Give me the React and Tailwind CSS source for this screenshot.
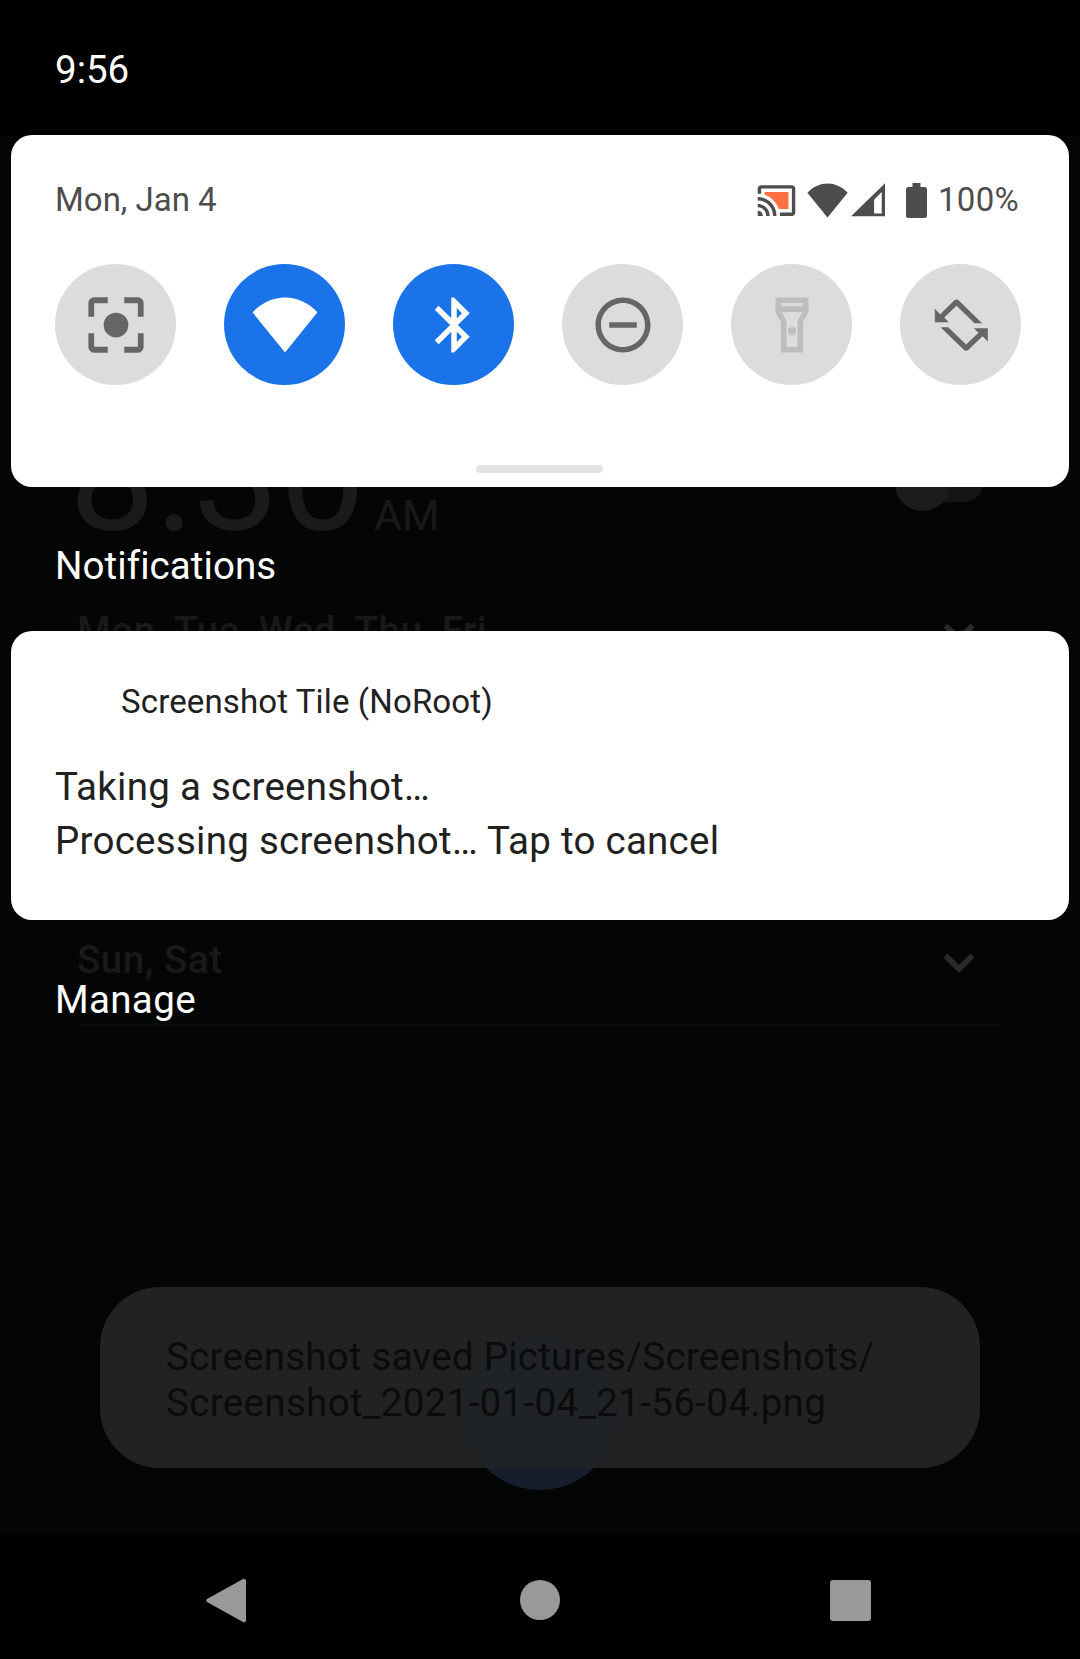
import React from "react";

const wifiPath = "M12 22L23.8 7.4C20.6 4 16.5 2 12 2S3.4 4 .2 7.4L12 22z";

function ScreenshotIcon() {
  return (
    <svg viewBox="0 0 24 24" className="w-[66px] h-[66px]" fill="none">
      <path d="M3 9V4a1 1 0 0 1 1-1h5M15 3h5a1 1 0 0 1 1 1v5M21 15v5a1 1 0 0 1-1 1h-5M9 21H4a1 1 0 0 1-1-1v-5" stroke="#666666" strokeWidth="2.1" />
      <circle cx="12" cy="12" r="4.5" fill="#666666" />
    </svg>
  );
}

function WifiIcon({ className, fill }) {
  return (
    <svg viewBox="0 0 24 24" className={className}>
      <path d={wifiPath} fill={fill} />
    </svg>
  );
}

function BluetoothIcon() {
  return (
    <svg viewBox="0 0 24 24" className="w-[66px] h-[66px]" fill="#ffffff">
      <path d="M17.71 7.71L12 2h-1v7.59L6.41 5 5 6.41 10.59 12 5 17.59 6.41 19 11 14.41V22h1l5.71-5.71-4.3-4.29 4.3-4.29zM13 5.83l1.88 1.88L13 9.59V5.83zm1.88 10.46L13 18.17v-3.76l1.88 1.88z" />
    </svg>
  );
}

function DndIcon() {
  return (
    <svg viewBox="0 0 24 24" className="w-[66px] h-[66px]" fill="#666666">
      <path d="M7 11h10v2H7zM12 2C6.48 2 2 6.48 2 12s4.48 10 10 10 10-4.48 10-10S17.52 2 12 2zm0 18c-4.41 0-8-3.59-8-8s3.59-8 8-8 8 3.59 8 8-3.59 8-8 8z" />
    </svg>
  );
}

function FlashlightIcon() {
  return (
    <svg viewBox="0 0 24 24" className="w-[66px] h-[66px]" fill="#bdbdbd">
      <path
        fillRule="evenodd"
        d="M6 2h12v5.3L16 11v11H8V11L6 7.3V2zM8 4v1.2h8V4H8zM8.2 7.3L10 10.5V20h4v-9.5l1.8-3.2H8.2z"
      />
      <circle cx="12" cy="14.2" r="1.5" />
    </svg>
  );
}

function RotateIcon() {
  const arrow = "M103 85V125H145L131 111L168 76L222 128H245L175 60Q168 54 161 60L119 101Z";
  return (
    <svg viewBox="82.5 34.5 198 198" className="w-[66px] h-[66px]" fill="#666666">
      <path d={arrow} />
      <path d={arrow} transform="rotate(180 182.5 134)" />
    </svg>
  );
}

function CastIcon() {
  return (
    <svg viewBox="0 0 24 24" className="w-[41px] h-[41px]">
      <path fill="#ff7043" d="M19 7H5v1.63c3.96 1.28 7.09 4.41 8.37 8.37H19V7z" />
      <path fill="#4d4d4d" d="M1 18v3h3c0-1.66-1.34-3-3-3zm0-4v2c2.76 0 5 2.24 5 5h2c0-3.87-3.13-7-7-7zm0-4v2c4.97 0 9 4.03 9 9h2c0-6.08-4.93-11-11-11zm20-7H3c-1.1 0-2 .9-2 2v3h2V5h18v14h-7v2h7c1.1 0 2-.9 2-2V5c0-1.1-.9-2-2-2z" />
    </svg>
  );
}

function SignalIcon() {
  return (
    <svg viewBox="0 0 34.3 34" className="w-[34px] h-[34px]">
      <path fill="#4d4d4d" fillRule="evenodd" d="M34.3 0V33.4H0L34.3 0zM23.3 16.7V30.7H31V9L23.3 16.7z" />
    </svg>
  );
}

function BatteryIcon() {
  return (
    <svg viewBox="0 0 21 35" className="w-[21px] h-[35px]">
      <path fill="#4d4d4d" d="M6.5 0h8v4h4a2.5 2.5 0 0 1 2.5 2.5v26a2.5 2.5 0 0 1-2.5 2.5h-16a2.5 2.5 0 0 1-2.5-2.5v-26a2.5 2.5 0 0 1 2.5-2.5h4V0z" />
    </svg>
  );
}

function Tile({ active, children }) {
  return (
    <div className={`w-[121px] h-[121px] rounded-full flex items-center justify-center ${active ? "bg-[#1a73e8]" : "bg-[#dcdcdc]"}`}>
      {children}
    </div>
  );
}

function Chevron({ className }) {
  return (
    <svg viewBox="0 0 32 20" className={className} fill="none">
      <path d="M2.5 2.5L16 16L29.5 2.5" stroke="#2a2a2a" strokeWidth="5.5" />
    </svg>
  );
}

function BackgroundApp() {
  return (
    <div className="absolute inset-0">
      <div className="absolute left-[69px] top-[428px] flex items-baseline text-[#1a1a1a] leading-[100px]">
        <span className="text-[154px]">8:30</span>
        <span className="text-[43px] text-[#191919] ml-[8px]">AM</span>
      </div>
      <div className="absolute left-[895px] top-[456px] w-[88px] h-[55px]">
        <div className="absolute left-[14px] right-0 top-[8px] h-[38px] rounded-full bg-[#151515]" />
        <div className="absolute left-0 top-0 w-[55px] h-[55px] rounded-full bg-[#1c1c1c]" />
      </div>
      <p className="absolute left-[77px] top-[606px] text-[38.5px] tracking-[0.55px] leading-[50px] font-medium text-[#191919]">Mon, Tue, Wed, Thu, Fri</p>
      <Chevron className="absolute left-[943px] top-[623px] w-[32px] h-[20px]" />
      <p className="absolute left-[77px] top-[935px] text-[38.5px] tracking-[0.55px] leading-[50px] font-medium text-[#191919]">Sun, Sat</p>
      <Chevron className="absolute left-[943px] top-[953px] w-[32px] h-[20px]" />
      <div className="absolute left-[78px] top-[1024px] w-[924px] h-[2px] bg-[#0c0d0d]" />
      <div className="absolute left-[463px] top-[1336px] w-[154px] h-[154px] rounded-full bg-[#151e2a]" />
      <div className="absolute left-[100px] top-[1287px] w-[880px] h-[181px] rounded-[60px] bg-[#222222] overflow-hidden pl-[66px] pt-[47px]">
        <div className="absolute left-[363px] top-[49px] w-[154px] h-[154px] rounded-full bg-[#1f2327]" />
        <p className="relative text-[38.5px] tracking-[0.24px] leading-[46px] text-[#0b0b0b]">Screenshot saved Pictures/Screenshots/</p>
        <p className="relative text-[38.5px] tracking-[0.35px] leading-[46px] text-[#0b0b0b]">Screenshot_2021-01-04_21-56-04.png</p>
      </div>
    </div>
  );
}

export default function App() {
  return (
    <div className="relative w-[1080px] h-[1659px] bg-[#040606] overflow-hidden font-['Roboto',sans-serif]">
      <BackgroundApp />

      <div className="relative flex flex-col h-full">
        <div className="h-[135px] shrink-0 bg-black px-[55px] pt-[47px]">
          <p className="text-[38.5px] leading-[46px] text-white">9:56</p>
        </div>

        <div className="mx-[11px] h-[352px] shrink-0 bg-white rounded-[21px] flex flex-col">
          <div className="flex items-center justify-between pl-[44px] pr-[50px] h-[44px] mt-[43px]">
            <p className="text-[33px] leading-[44px] text-[#4d4d4d]">Mon, Jan 4</p>
            <div className="flex items-center">
              <CastIcon />
              <WifiIcon className="w-[41px] h-[41px] ml-[10px]" fill="#4d4d4d" />
              <div className="ml-[3px]"><SignalIcon /></div>
              <div className="ml-[21px]"><BatteryIcon /></div>
              <span className="ml-[11px] text-[33px] tracking-[0.3px] leading-[44px] text-[#4d4d4d]">100%</span>
            </div>
          </div>
          <div className="flex justify-between pl-[44px] pr-[48px] mt-[42px]">
            <Tile><ScreenshotIcon /></Tile>
            <Tile active><WifiIcon className="w-[66px] h-[66px]" fill="#ffffff" /></Tile>
            <Tile active><BluetoothIcon /></Tile>
            <Tile><DndIcon /></Tile>
            <Tile><FlashlightIcon /></Tile>
            <Tile><RotateIcon /></Tile>
          </div>
          <div className="w-[127px] h-[8px] rounded-full bg-[#e3e3e3] ml-[465px] mt-[80px]" />
        </div>

        <div className="h-[144px] shrink-0 px-[55px] pt-[53px]">
          <p className="text-[38.5px] tracking-[0.08px] leading-[52px] text-white">Notifications</p>
        </div>

        <div className="mx-[11px] h-[289px] shrink-0 bg-white rounded-[21px] px-[44px]">
          <p className="pl-[66px] pt-[49px] text-[33px] tracking-[0.13px] leading-[44px] text-[#212121]">Screenshot Tile (NoRoot)</p>
          <p className="mt-[36px] text-[38.5px] tracking-[0.26px] leading-[54px] text-[#212121]">Taking a screenshot…</p>
          <p className="text-[38.5px] tracking-[0.26px] leading-[54px] text-[#212121]">Processing screenshot… Tap to cancel</p>
        </div>

        <div className="h-[614px] shrink-0 px-[55px] pt-[54px]">
          <p className="text-[38.5px] tracking-[0.35px] leading-[52px] text-white">Manage</p>
        </div>

        <div className="flex-1 bg-black relative flex items-center">
          <svg viewBox="0 0 40 45" className="absolute left-[206px] top-[44px] w-[40px] h-[45px]">
            <path d="M37 1L1 21a2 2 0 0 0 0 3L37 44a2 2 0 0 0 3-1.5V2.5A2 2 0 0 0 37 1z" fill="#999999" />
          </svg>
          <div className="absolute left-[520px] top-[46px] w-[40px] h-[40px] rounded-full bg-[#999999]" />
          <div className="absolute left-[830px] top-[46px] w-[41px] h-[41px] rounded-[3px] bg-[#999999]" />
        </div>
      </div>
    </div>
  );
}
